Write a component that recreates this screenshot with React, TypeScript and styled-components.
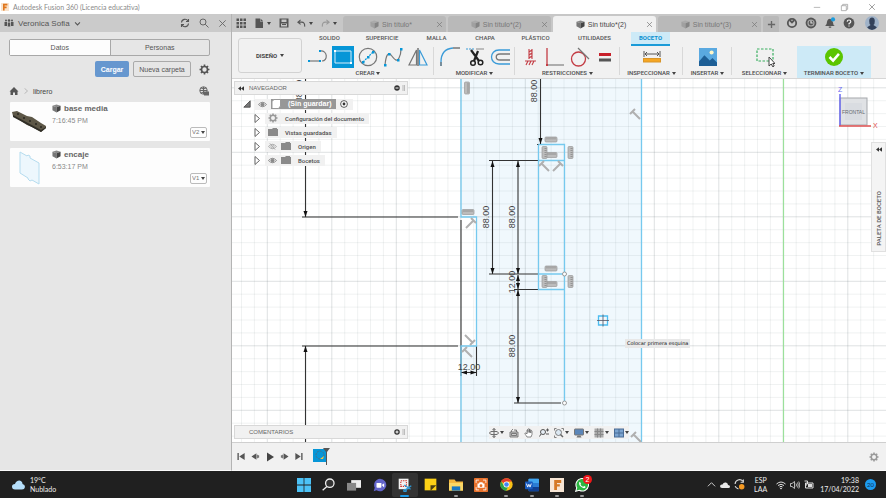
import React from 'react';
import styled, { createGlobalStyle, css } from 'styled-components';

const ARIAL = "'Liberation Sans', Arial, sans-serif";
const ROBOTO = "Roboto, 'Liberation Sans', sans-serif";
const LATO = "Lato, 'Open Sans', sans-serif";

const GlobalStyle = createGlobalStyle`
  *, *::before, *::after { box-sizing: border-box; }
  html, body, #root { height: 100%; }
  body { margin: 0; overflow: hidden; background: #fff; font-family: ${ARIAL}; font-size: 7px; color: #444; }
  button, select { font: inherit; color: inherit; background: none; border: 0; padding: 0; margin: 0; }
  a { color: inherit; text-decoration: none; }
  ul { list-style: none; margin: 0; padding: 0; }
  svg { display: block; flex: none; }
`;

/* ---------- shell ---------- */
const Page = styled.div`
  min-height: 100vh; display: flex; flex-direction: column;
`;
const TitleBar = styled.header`
  display: flex; align-items: center; gap: 4px; height: 14px; padding: 0 10px 0 1px;
  background: #fff; color: #8a8a8a;
`;
const AppTitle = styled.h1`
  margin: 0; font: 7px/12px ${LATO}; flex: 1;
`;
const WindowButtons = styled.div`
  display: flex; gap: 19px;
`;
const Workspace = styled.div`
  flex: 1; min-height: 0; display: grid; grid-template-columns: 232px minmax(0, 1fr);
`;
const IconButton = styled.button`
  display: inline-flex; align-items: center; justify-content: center; gap: 3px;
`;
const Caret = styled.span`
  display: inline-block; border: 2px solid transparent; border-top: 3px solid #444; border-bottom: 0;
`;

/* ---------- data panel ---------- */
const DataPanel = styled.aside`
  background: #e6e6e6; border-right: 1px solid #b4b4b4; border-bottom: 1px solid #fafafa;
`;
const PanelHeader = styled.div`
  display: flex; align-items: center; height: 18px; padding: 0 4px; background: #cbcbcb;
`;
const TeamButton = styled.button`
  display: flex; align-items: center; gap: 4px; flex: 1; font-size: 8px; color: #555;
`;
const HeaderIcons = styled.div`
  display: flex; gap: 9px;
`;
const PanelBody = styled.div`
  display: flex; flex-direction: column; padding: 7px 21px 0 9px;
`;
const Segmented = styled.div`
  display: grid; grid-template-columns: 1fr 1fr; border: 1px solid #a8a8a8; border-radius: 2px;
`;
const Segment = styled.button<{ $on?: boolean }>`
  height: 15px; background: ${p => (p.$on ? '#fdfdfd' : 'transparent')}; color: #555;
  & + & { border-left: 1px solid #a8a8a8; }
`;
const Actions = styled.div`
  display: flex; align-items: center; justify-content: flex-end; gap: 4px; height: 16px; margin-top: 5px;
`;
const ActionButton = styled.button<{ $primary?: boolean }>`
  height: 16px; border-radius: 2px;
  ${p => p.$primary
    ? css`width: 34px; background: #6697cf; color: #fff; font-weight: 700;`
    : css`width: 58px; border: 1px solid #aaa; margin-right: 4px; color: #555;`}
`;
const Breadcrumb = styled.nav`
  display: flex; align-items: center; gap: 4px; height: 16px; margin-top: 6px; padding-right: 1px;
`;
const Crumb = styled.a`flex: 1;`;
const CardList = styled.ul`
  display: grid; gap: 7px; margin-top: 3px;
`;
const Card = styled.li`
  display: grid; grid-template-columns: 40px 1fr 17px; gap: 2px; height: 39px; padding-right: 3px; background: #fdfdfd; border-radius: 1px; margin-left: 1px;
`;
const CardTitle = styled.h2`
  display: flex; align-items: center; gap: 3px; margin: 1px 0 0; font: 700 8px/11px ${ARIAL}; color: #666;
`;
const CardTime = styled.time`
  display: block; font-size: 7px; line-height: 13px; color: #888;
`;
const Version = styled.span`
  display: flex; align-items: center; justify-content: center; gap: 1px; align-self: end; height: 11px; margin-bottom: 3px;
  border: 1px solid #bbb; border-radius: 2px;
`;
const VersionSelect = styled.select`
  appearance: none; font: 6px/9px ${ARIAL}; color: #777; width: 8px;
`;

/* ---------- document tabs ---------- */
const Main = styled.main`
  display: flex; flex-direction: column; min-width: 0;
`;
const DocBar = styled.div`
  display: flex; align-items: stretch; height: 18px; background: #c7c7c7;
`;
const QuickTools = styled.div`
  display: flex; align-items: center; width: 111px; padding-left: 4px; gap: 8px;
`;
const DocTabs = styled.div`
  display: flex; flex: 1; gap: 2px; padding-top: 2px;
`;
const DocTab = styled.div<{ $on?: boolean }>`
  flex: 1; display: flex; align-items: center; border-radius: 3px 3px 0 0; padding: 0 3px 0 3px;
  background: ${p => (p.$on ? '#f1f1f1' : '#b9b9b9')};
  color: ${p => (p.$on ? '#444' : '#777')};
`;
const DocTabName = styled.button`
  display: flex; align-items: center; justify-content: center; gap: 3px; flex: 1; font-size: 7px;
`;
const DocActions = styled.div`
  display: flex; align-items: center; gap: 7px; padding: 0 7px 0 2px;
`;
const Profile = styled(IconButton)`margin-left: 3px;`;
const NewTab = styled.button`
  align-self: stretch; display: flex; align-items: center; justify-content: center; width: 16px; margin-top: 2px; background: #b9b9b9; border-radius: 2px 2px 0 0;
`;

/* ---------- ribbon ---------- */
const Ribbon = styled.div`
  display: flex; height: 47px; background: #f1f1f1; border-bottom: 1px solid #d6d6d6; font: 6px/8px ${ROBOTO};
`;
const WorkspaceButton = styled.button`
  width: 64px; height: 35px; margin: 6px 0 0 6px; border: 1px solid #d2d2d2; border-radius: 3px;
  display: flex; align-items: center; justify-content: center; gap: 3px; font-weight: 700; color: #444;
`;
const RibbonMain = styled.div`
  display: flex; flex-direction: column;
`;
const RibbonTabs = styled.div`
  display: grid; grid-template-columns: 55px 50px 59px 38px 63px 55px 48px; height: 14px; font-weight: 500;
`;
const RibbonTab = styled.button<{ $on?: boolean }>`
  padding-bottom: 2px; color: #555;
  ${p => p.$on && css`width: 39px; justify-self: end; padding-bottom: 0; background: #cdeaf7; color: #0a8fd0; font-weight: 700; border-bottom: 2px solid #1a9bd8;`}
`;
const Groups = styled.div`
  display: grid; grid-template-columns: 132px 81px 105px 63px 49px 65px 74px; height: 32px;
`;
const Group = styled.section<{ $finish?: boolean }>`
  position: relative; display: flex; flex-direction: column; align-items: center;
  ${p => p.$finish
    ? css`background: #cdeaf7;`
    : css`&:not(:nth-last-child(2))::after { content: ''; position: absolute; right: 0; top: 1px; height: 28px; border-right: 1px solid #d8d8d8; }`}
`;
const Tools = styled.div`
  display: flex; justify-content: center; gap: 3px; height: 21px; align-items: center; margin-bottom: 2px;
`;
const Tool = styled.button<{ $on?: boolean }>`
  width: 22px; height: 22px; display: flex; align-items: center; justify-content: center;
  background: ${p => (p.$on ? '#0696d7' : 'transparent')};
`;
const GroupLabel = styled.button`
  display: flex; align-items: center; gap: 2px; height: 8px; font-weight: 500; color: #4c4c4c;
`;

/* ---------- canvas ---------- */
const Canvas = styled.div`
  position: relative; flex: 1; min-height: 0; overflow: hidden; background: #fff;
`;
const Sketch = styled.svg`
  position: absolute; inset: 0; width: 100%; height: 100%;
`;
const BrowserPanel = styled.div`
  position: absolute; top: 2px; left: 2px; width: 174px;
`;
const DockBar = styled.div`
  display: flex; align-items: center; height: 14px; padding: 0 1px 0 3px; background: #f1f1f1; border: 1px solid #d8d8d8;
  font: 6px/12px ${ARIAL}; color: #666; gap: 5px;
`;
const DockTitle = styled.span<{ $inset?: boolean }>`flex: 1; padding-left: ${p => (p.$inset ? 11 : 0)}px;`;
const Comments = styled.div`
  position: absolute; left: 2px; bottom: 3px; width: 174px;
`;
const Tree = styled.ul`padding: 2px 0 0 9px;`;
const TreeRow = styled.li<{ $depth: number }>`
  display: flex; align-items: center; gap: 4px; height: 14px; padding-left: ${p => p.$depth * 11}px;
`;
const TreeItem = styled.div`
  display: flex; align-items: center; gap: 4px; height: 11px; padding: 0 5px 0 3px; background: #f1f1f1;
  font: 500 6px/11px ${ROBOTO}; color: #4c4c4c;
`;
const TreeName = styled.span`padding-left: 3px;`;
const RootName = styled.span`
  display: flex; align-items: center; gap: 7px; height: 10px; width: 65px; background: #979797; color: #fff; font: 700 7px/10px ${ARIAL};
`;
const Palette = styled.button`
  position: absolute; top: 63px; right: 0; width: 15px; height: 110px; padding: 4px 0 5px; background: #f4f4f4; border: 1px solid #e0e0e0;
  display: flex; flex-direction: column; align-items: center; justify-content: space-between;
  font: 500 6px/8px ${ROBOTO}; color: #555;
`;
const PaletteTitle = styled.span`
  writing-mode: vertical-rl; transform: rotate(180deg);
`;
const Tooltip = styled.div`
  position: absolute; left: 393px; top: 260px; padding: 0 2px; background: #e8e8e8; font: 5px/9px 'DejaVu Sans', sans-serif; color: #111;
`;
const ViewCube = styled.button`
  position: absolute; top: 5px; right: 4px;
`;
const NavBar = styled.div`
  position: absolute; bottom: 3px; left: 50%; transform: translateX(-50%); height: 13px; background: #f1f1f1;
  display: flex; align-items: center; gap: 5px;
  button { gap: 1px; }
`;

/* ---------- timeline & taskbar ---------- */
const Timeline = styled.div`
  display: flex; align-items: center; height: 29px; padding: 0 7px 0 5px; gap: 5px; background: #f1f1f1; border-top: 1px solid #cfcfcf; border-bottom: 1px solid #fafafa;
`;
const Spacer = styled.span`flex: 1;`;
const TaskBar = styled.footer`
  display: grid; grid-template-columns: 1fr 304px 1fr; align-items: center; height: 27px; background: #202020; color: #eee; font: 7px/9px ${LATO};
`;
const Weather = styled.button`
  display: flex; align-items: center; gap: 5px; padding-left: 12px; text-align: left;
`;
const Apps = styled.div`
  display: grid; grid-template-columns: repeat(12, 1fr);
`;
const AppButton = styled.button<{ $state?: 'on' | 'open' }>`
  position: relative; height: 24px; display: flex; align-items: center; justify-content: center; border-radius: 2px;
  ${p => p.$state === 'on' && css`background: #333;`}
  ${p => p.$state && css`&::after { content: ''; position: absolute; bottom: 0; height: 2px; border-radius: 1px; width: ${p.$state === 'on' ? 9 : 4}px; background: ${p.$state === 'on' ? '#1c9be8' : '#999'}; }`}
`;
const Badge = styled.span`
  position: absolute; right: 3px; top: 2px; width: 9px; height: 9px; border-radius: 50%; background: #f01818; color: #fff; font: 7px/9px ${ARIAL}; text-align: center;
`;
const Tray = styled.div`
  display: flex; align-items: center; justify-content: flex-end; gap: 4px; padding-right: 10px;
`;
const Stack = styled.span<{ $right?: boolean; $gap?: number }>`
  text-align: ${p => (p.$right ? 'right' : 'center')}; white-space: pre-line; margin: 0 ${p => p.$gap ?? 0}px;
`;
const Count = styled.span`
  width: 11px; height: 11px; border-radius: 50%; background: #1c9bf0; color: #103050; font: 6px/11px ${LATO}; text-align: center;
`;

/* ---------- icons ---------- */
type IP = { w?: number; h?: number; vb?: string; children: React.ReactNode; stroke?: string; sw?: number; fill?: string };
const I = ({ w = 10, h, vb = '0 0 20 20', children, stroke = 'none', sw = 2, fill = 'none' }: IP) => (
  <svg width={w} height={h ?? w} viewBox={vb} fill={fill} stroke={stroke} strokeWidth={sw} aria-hidden="true">{children}</svg>
);
const Close = ({ c = '#777', w = 8 }: { c?: string; w?: number }) => <I w={w} stroke={c} sw={2}><path d="M3 3L17 17M17 3L3 17" /></I>;
const Cube = ({ dim }: { dim?: boolean }) => (
  <I w={9}><path d="M1 4L10 1L19 4L10 7Z" fill={dim ? '#aaa' : '#888'} /><path d="M1 4L10 7V19L1 14Z" fill={dim ? '#a0a0a0' : '#777'} /><path d="M19 4L10 7V19L19 14Z" fill={dim ? '#848484' : '#444'} /></I>
);
const Gear = ({ w = 11, c = '#555' }: { w?: number; c?: string }) => (
  <I w={w} stroke={c} sw={3}><circle cx="10" cy="10" r="5.5" /><path d="M10 1V4M10 16V19M1 10H4M16 10H19M3.6 3.6L5.7 5.7M14.3 14.3L16.4 16.4M3.6 16.4L5.7 14.3M14.3 5.7L16.4 3.6" /></I>
);
const Eye = ({ off }: { off?: boolean }) => (
  <I w={9} stroke={off ? '#aaa' : '#888'} sw={2}><path d="M1 10Q10 0 19 10Q10 20 1 10Z" /><circle cx="10" cy="10" r="3.5" fill={off ? 'none' : '#888'} />{off && <path d="M4 3L16 17" />}</I>
);
const Folder = () => <I w={10} h={8} vb="0 0 20 16" fill="#8a8a8a"><path d="M0 2H8L10 0H18V2H20V16H0Z" /></I>;
const Rewind = () => <I w={6} h={5} vb="0 0 14 10" fill="#333"><path d="M7 0V10L0 5ZM14 0V10L7 5Z" /></I>;
const Expander = ({ open }: { open?: boolean }) => open
  ? <I w={8} stroke="#444" sw={2} fill="#777"><path d="M18 2V18H2Z" /></I>
  : <I w={7} h={9} vb="0 0 14 18" stroke="#666" sw={2} fill="#fff"><path d="M2 1L11 9L2 17Z" /></I>;
const Dock = ({ plus }: { plus?: boolean }) => (
  <I w={12} h={8} vb="0 0 24 16"><circle cx="6" cy="8" r="5.5" fill="#333" /><path d={plus ? 'M3 8H9M6 5V11' : 'M3 8H9'} stroke="#fff" strokeWidth="2" /><path d="M18 2V14M21 2V14" stroke="#aaa" strokeWidth="1.5" /></I>
);

const createTools = [
  { n: 'Línea', i: <I w={20} stroke="#777" sw={1.2}><path d="M1 14H12" /><path d="M12 4C20 3 20 14 14 14" /><g fill="#0696d7" stroke="none"><rect y="13" width="2" height="2" /><rect x="11" y="13" width="2" height="2" /><rect x="11" y="3" width="2" height="2" /></g></I> },
  { n: 'Rectángulo', on: true, i: <I w={20} stroke="#d6eefb" sw={1}><path d="M2 4H18V16H2Z" /><g fill="#fff" stroke="none"><rect x="1" y="3" width="2" height="2" /><rect x="17" y="15" width="2" height="2" /></g></I> },
  { n: 'Círculo', i: <I w={20} stroke="#777" sw={1.2}><circle cx="10" cy="10" r="8.7" /><path d="M5 15L15 5" strokeDasharray="2 1" stroke="#0696d7" /><g fill="#0696d7" stroke="none"><rect x="4" y="14" width="2.5" height="2.5" /><rect x="9" y="9" width="2.5" height="2.5" /><rect x="14" y="4" width="2.5" height="2.5" /></g></I> },
  { n: 'Spline', i: <I w={20} stroke="#777" sw={1.2}><path d="M2 18C3 8 5 5 8 8C12 13 14 15 16 11C18 7 18 5 18 2" /><g fill="#0696d7" stroke="none"><rect x="1" y="17" width="2.5" height="2.5" /><rect x="5" y="6" width="2.5" height="2.5" /><rect x="14" y="12" width="2.5" height="2.5" /><rect x="17" y="1" width="2.5" height="2.5" /></g></I> },
  { n: 'Simetría', i: <I w={20} sw={1.2}><path d="M8.500 3V18H1Z" stroke="#777" /><path d="M11.500 3V18H19Z" stroke="#3a9bd8" /><path d="M10 1V19" stroke="#555" /></I> },
];
const modifyTools = [
  { n: 'Empalme', i: <I w={20} sw={1.3}><path d="M1 19V15Q1 2 13 1" stroke="#3a9bd8" /><path d="M13 1H20M1 15V19" stroke="#777" /></I> },
  { n: 'Recortar', i: <I w={20} sw={1.2}><path d="M1 2H9" stroke="#3a9bd8" strokeDasharray="2 1" /><path d="M11 2H19" stroke="#999" /><path d="M6 3L14 14M13 4L9 14" stroke="#222" strokeWidth="2.2" /><circle cx="8" cy="16" r="2.3" stroke="#222" strokeWidth="1.5" /><circle cx="15.500" cy="15.500" r="2.3" stroke="#222" strokeWidth="1.5" /></I> },
  { n: 'Desfase', i: <I w={20} sw={1.3}><path d="M20 3H9C-1 3 -1 17 9 17H20" stroke="#3a9bd8" /><path d="M20 7H10C5 7 5 13 10 13H20" stroke="#777" /></I> },
];
const constraintTools = [
  { n: 'Fijar', i: <I w={20} stroke="#c33c44" sw={1.1}><path d="M9 2V12M12 2V12M9 5L12 3M9 8L12 6M9 11L12 9M5 14H16M6 18L8 14M9 18L11 14M12 18L14 14" /></I> },
  { n: 'Perpendicular', i: <I w={20} sw={1.3}><path d="M2 1V18" stroke="#c33c44" /><path d="M2 18H19" stroke="#888" /><rect x="1" y="17" width="2" height="2" fill="#c33c44" /></I> },
  { n: 'Tangente', i: <I w={20} sw={1.3}><circle cx="8.500" cy="12" r="7" stroke="#c33c44" /><path d="M8 1L19 12" stroke="#777" /></I> },
  { n: 'Igual', i: <I w={20}><rect x="4" y="6" width="12" height="3" fill="#c8202a" /><rect x="4" y="11.500" width="12" height="3" fill="#555" /></I> },
];
type ToolDef = { n: string; on?: boolean; i: React.ReactNode };
const ToolGroup = ({ label, tools, finish }: { label: string; tools: ToolDef[]; finish?: boolean }) => (
  <Group $finish={finish}>
    <Tools>{tools.map(t => <Tool key={t.n} $on={t.on} aria-label={t.n}>{t.i}</Tool>)}</Tools>
    <GroupLabel>{label}<Caret /></GroupLabel>
  </Group>
);

/* ---------- sketch drawing ---------- */
const range = (n: number) => Array.from({ length: n }, (_, i) => i);
const STEP = 12.9;
const Arrow = ({ x, y, r }: { x: number; y: number; r: number }) => (
  <path d="M0 0L-2 -6H2Z" fill="#111" transform={`translate(${x} ${y}) rotate(${r})`} />
);
const VDim = ({ x, a, b, up = true, down = true }: { x: number; a: number; b: number; up?: boolean; down?: boolean }) => (
  <g><path d={`M${x} ${a}V${b}`} stroke="#333" strokeWidth="1.1" />{up && <Arrow x={x} y={a} r={180} />}{down && <Arrow x={x} y={b} r={0} />}</g>
);
const Dim = ({ x, y, t }: { x: number; y: number; t: string }) => (
  <text transform={`translate(${x} ${y}) rotate(-90)`} textAnchor="middle">{t}</text>
);
const Mark = ({ x, y, v }: { x: number; y: number; v?: boolean }) => (
  <g transform={`translate(${x} ${y})${v ? ' rotate(90)' : ''}`}>
    <rect x="-6" y="-2.500" width="12" height="5" rx="1" fill="#bcbcbc" stroke="#999" strokeWidth=".7" />
    <path d="M-4 -2V0M-2 -2V0M0 -2V0M2 -2V0M4 -2V0" stroke="#777" strokeWidth=".6" />
  </g>
);
const Tee = ({ x, y, r = 0 }: { x: number; y: number; r?: number }) => (
  <path d="M-3 2L2 -3M0 0L7 7" stroke="#b0b0b0" strokeWidth="2" transform={`translate(${x} ${y}) rotate(${r})`} />
);
const SketchView = () => (
  <Sketch role="img" aria-label="Boceto" fill="none">
    <g transform="translate(-232 -79)">
      <path d="M461 79H641.500V1500H461V346H476.500V217H461Z" fill="#f0f8fd" />
      {range(160).map(i => <path key={`v${i}`} d={`M${241.5 + STEP * i} 79V1500`} stroke="#5a6a70" strokeOpacity={i % 5 === 2 ? 0.2 : 0.09} />)}
      {range(100).map(i => <path key={`h${i}`} d={`M232 ${87.8 + STEP * i}H2600`} stroke="#5a6a70" strokeOpacity={i % 5 === 0 ? 0.2 : 0.09} />)}
      <path d="M783.500 79V1500" stroke="#9be09b" strokeWidth="1.2" />
      <g stroke="#333" strokeWidth="1.1">
        <path d="M302 217H458M302 346H458M489 160.500H538M489 274H538M514 289.500H538M514 403H561M461 220V346M476.500 346V376M461 346V376M461 372.500H476M537 144.500H551" />
      </g>
      <g stroke="#76c9ee" strokeWidth="1.3">
        <path d="M461 79V217H476.500V346H461V1500M641.500 79V1500M538.500 144.500V289.500H564.500M538.500 144.500H564.500V403M538.500 160.500H564.500M538.500 274H564.500" />
      </g>
      <VDim x={305.5} a={79} b={217} up={false} />
      <VDim x={305.5} a={346} b={1500} down={false} />
      <VDim x={540.5} a={79} b={144} up={false} />
      <VDim x={492.5} a={161} b={274} />
      <VDim x={518} a={161} b={274} />
      <VDim x={518} a={275} b={289} />
      <VDim x={518} a={290} b={403} />
      <Arrow x={461} y={372.5} r={90} />
      <Arrow x={476.5} y={372.5} r={-90} />
      <g fill="#444" fontFamily="Liberation Sans, Arial, sans-serif" fontSize="9">
        <Dim x={302} y={91} t="88.00" />
        <Dim x={537} y={91} t="88.00" />
        <Dim x={489} y={217} t="88.00" />
        <Dim x={515} y={217} t="88.00" />
        <Dim x={515} y={282} t="12.00" />
        <Dim x={515} y={346} t="88.00" />
        <text x="469" y="370" textAnchor="middle">12.00</text>
      </g>
      {[[551, 139.5], [551, 155], [468, 212], [551, 268.5], [551, 284]].map(([x, y]) => <Mark key={`${x}-${y}`} x={x} y={y} />)}
      {[[544.5, 152.5], [570.5, 152.5], [467, 88], [544.5, 281.5], [570.5, 281.5]].map(([x, y]) => <Mark key={`${x}-${y}`} x={x} y={y} v />)}
      <Tee x={633} y={112} /><Tee x={542} y={164} /><Tee x={560} y={164} r={90} /><Tee x={473} y={221} r={90} />
      <Tee x={472} y={342} r={180} /><Tee x={465} y={350} /><Tee x={634} y={435} />
      <g fill="#fff" stroke="#999"><circle cx="564.500" cy="274" r="2" /><circle cx="564.500" cy="403" r="2" /></g>
      <path d="M598.500 316H607.500V325H598.500Z" stroke="#4cbcf0" strokeWidth="1.3" />
      <path d="M597 320.500H609M603 314.500V326.500" stroke="#556" strokeWidth=".8" />
    </g>
  </Sketch>
);

const navTools = [
  { n: 'Órbita', c: true, i: <I w={10} stroke="#555" sw={1.8}><path d="M10 1V19M7 4L10 1L13 4M7 16L10 19L13 16" /><ellipse cx="10" cy="10" rx="9" ry="3.500" /></I> },
  { n: 'Mirar a', i: <I w={10} stroke="#666" sw={1.6}><path d="M2 8H18V18H2ZM5 8V5L8 2M15 8V4H10M5 11H15V15H5Z" fill="#ccc" /></I> },
  { n: 'Encuadre', i: <I w={10} stroke="#666" sw={1.5} fill="#fff"><path d="M6 18C4 14 1 12 2 10Q4 9 6 12V4Q7 3 8 4V9V2Q9.500 1 11 2V9V3Q12.500 2 13.500 4V10V5Q15 4 16 6V13L14 18Z" /></I> },
  { n: 'Zoom', i: <I w={10} stroke="#555" sw={2}><circle cx="8" cy="8" r="5" fill="#e7eef5" /><path d="M4 12L1 17M14 4H20M17 1V7M14 12H20" /></I> },
  { n: 'Ajustar', c: true, i: <I w={10} stroke="#666" sw={1.6}><circle cx="9" cy="9" r="6" fill="#dce8f2" /><path d="M13 13L18 18" strokeWidth="3" /><path d="M1 5V1H5M15 1H19V5M1 15V19H5" /></I> },
  { n: 'Visualización', c: true, i: <I w={10}><rect x="1" y="2" width="18" height="12" rx="1" fill="#5c86b8" stroke="#777" strokeWidth="2" /><path d="M7 15H13L15 19H5Z" fill="#777" /></I> },
  { n: 'Rejilla', c: true, i: <I w={10}><rect x="1" y="1" width="18" height="18" fill="#aaa" /><path d="M1 7H19M1 13H19M7 1V19M13 1V19" stroke="#888" /></I> },
  { n: 'Ventanas', c: true, i: <I w={10}><rect x="1" y="2" width="18" height="16" fill="#7ba3cf" stroke="#4a6c96" strokeWidth="2" /><path d="M10 2V18M1 10H19" stroke="#4a6c96" strokeWidth="2" /></I> },
];

const apps: { n: string; s?: 'on' | 'open'; b?: string; i: React.ReactNode }[] = [
  { n: 'Inicio', i: <I w={14} vb="0 0 14 14"><path d="M0 0H6.600V6.600H0ZM7.400 0H14V6.600H7.400ZM0 7.400H6.600V14H0ZM7.400 7.400H14V14H7.400Z" fill="#4cc2f6" /></I> },
  { n: 'Buscar', i: <I w={13} stroke="#eee" sw={2}><circle cx="12" cy="8" r="6.500" fill="#333" /><path d="M7.500 13L1 19" /></I> },
  { n: 'Vista de tareas', i: <I w={14}><rect x="6" y="3" width="14" height="11" fill="#eee" /><rect y="7" width="13" height="11" fill="#888" /></I> },
  { n: 'Chat', i: <I w={14}><path d="M10 1A9 9 0 1 1 5 17.500L1 19L2.500 14A9 9 0 0 1 10 1Z" fill="#6264c9" /><rect x="5" y="7" width="7" height="7" rx="1" fill="#fff" /><path d="M12.500 10L16 7.500V13.500Z" fill="#fff" /></I> },
  { n: 'Recortes', s: 'on', i: <I w={14}><rect x="1" y="1" width="14" height="15" fill="#f2f2f2" /><rect x="4" y="4" width="8" height="8" stroke="#d0342c" strokeWidth="1.600" strokeDasharray="2 1.200" /><path d="M9 10L18 16M10 17L19 11" stroke="#2c9ad8" strokeWidth="1.800" /><circle cx="10" cy="18" r="1.700" stroke="#2c9ad8" /></I> },
  { n: 'Notas', i: <I w={13}><path d="M1 1H19V19H1Z" fill="#fcd116" /><path d="M10 19V11H19L11 19Z" fill="#4a4015" /></I> },
  { n: 'Explorador', s: 'open', i: <I w={14}><path d="M0 2H8L10 5H20V18H0Z" fill="#f3b53c" /><path d="M0 7H20V18H0Z" fill="#fbd765" /><path d="M4 12H16V18H4Z" fill="#1876c2" /></I> },
  { n: 'Captura', i: <I w={14}><rect width="20" height="20" rx="1" fill="#e8722d" /><path d="M3 7V3H7M13 3H17V7M17 13V17H13M7 17H3V13" stroke="#fff" strokeWidth="1.200" /><path d="M5 8H7L8 6H12L13 8H15V14H5Z" fill="#fff" /><circle cx="10" cy="11" r="2" fill="#e8722d" /></I> },
  { n: 'Chrome', s: 'open', i: <I w={13}><circle cx="10" cy="10" r="9.500" fill="#fbc116" /><path d="M10 10L1.700 5.300A9.500 9.500 0 0 1 18.300 5.500H10Z" fill="#e33b2e" /><path d="M1.700 5.300A9.500 9.500 0 0 0 9.500 19.500L13 12L7 13Z" fill="#2ba24c" /><circle cx="10" cy="10" r="4.600" fill="#fff" /><circle cx="10" cy="10" r="3.500" fill="#4285f4" /></I> },
  { n: 'Word', s: 'open', i: <I w={14}><rect x="5" y="1" width="15" height="18" rx="1" fill="#2b7cd3" /><path d="M5 7H20V2Q20 1 19 1H6Q5 1 5 2Z" fill="#41a5ee" /><path d="M5 13H20V18Q20 19 19 19H6Q5 19 5 18Z" fill="#103f91" /><rect y="5" width="11" height="11" rx="1" fill="#185abd" /><path d="M2 8L3.800 13L5.500 9L7.200 13L9 8" stroke="#fff" strokeWidth="1.300" /></I> },
  { n: 'Fusion 360', s: 'open', i: <I w={14}><rect width="20" height="20" fill="#f7e6d5" /><path d="M6 3H16V7H10V9H14V12H10V17H6Z" fill="#d67a26" /></I> },
  { n: 'WhatsApp', s: 'open', b: '2', i: <I w={14}><path d="M1 19L2.500 14A9 9 0 1 1 6 17.500Z" fill="#2cb742" stroke="#fff" strokeWidth="1.500" /><path d="M6 6Q7.500 5 8.500 8L8 9.500Q9.500 12 12 12.500L13 11.500Q15.500 12 15 13.500Q13 16 9 13Q5 10 6 6Z" fill="#fff" /></I> },
];

const tree = [
  { n: 'Configuración del documento', i: <Gear w={10} c="#999" /> },
  { n: 'Vistas guardadas', i: <Folder /> },
  { n: 'Origen', eye: true, off: true, i: <Folder /> },
  { n: 'Bocetos', eye: true, i: <Folder /> },
];

const files = [
  { n: 'base media', t: '7:16:45 PM', v: 'V2', i: <I w={38} h={39} vb="0 0 38 39"><path d="M2 10L7 9L17 14L22 15L31 21L36 24L36 26L31 30L22 25L17 23L8 17L3 14Z" fill="#5d5747" /><path d="M3 13L31 28L36 25V26L31 30L3 15Z" fill="#302e27" /><g fill="#2a2720"><circle cx="8" cy="12" r="1" /><circle cx="14" cy="16" r="1" /><circle cx="20" cy="19" r="1" /><circle cx="26" cy="22" r="1" /><circle cx="31" cy="25" r="1" /></g></I> },
  { n: 'encaje', t: '6:53:17 PM', v: 'V1', i: <I w={38} h={39} vb="0 0 38 39"><path d="M10 4L17 8L18 7L20 8L20 10L29 15V36L22 32L20 33L18 31V30L10 25Z" fill="#edf7fd" stroke="#b5dcef" strokeWidth="1" /></I> },
];

export default function App() {
  return (
    <Page>
      <GlobalStyle />
      <TitleBar>
        <I w={8}><rect width="20" height="20" fill="#f9e3cc" /><path d="M5 2H16V6H9V9H14V13H9V19H5Z" fill="#e0761c" /></I>
        <AppTitle>Autodesk Fusion 360 (Licencia educativa)</AppTitle>
        <WindowButtons>
          <IconButton aria-label="Minimizar"><I w={8} stroke="#aaa"><path d="M2 11H18" /></I></IconButton>
          <IconButton aria-label="Restaurar"><I w={9} stroke="#999" sw={1.6}><path d="M3 6H14V17H3ZM6 6V3H17V14H14" /></I></IconButton>
          <IconButton aria-label="Cerrar"><Close c="#888" /></IconButton>
        </WindowButtons>
      </TitleBar>
      <Workspace>
        <DataPanel>
          <PanelHeader>
            <TeamButton>
              <I w={10} fill="#555"><circle cx="4" cy="5" r="2" /><circle cx="10" cy="5" r="2.500" /><circle cx="16" cy="5" r="2" /><path d="M1 8H6V16H1ZM7.500 9H12.500V17H7.500ZM14 8H19V16H14Z" /></I>
              Veronica Sofia
              <I w={7} stroke="#555" sw={3}><path d="M3 7L10 14L17 7" /></I>
            </TeamButton>
            <HeaderIcons>
              <IconButton aria-label="Actualizar"><I w={10} stroke="#555" sw={2.2}><path d="M3 9A7 7 0 0 1 16 6M17 11A7 7 0 0 1 4 14M17 2V7H12M3 18V13H8" /></I></IconButton>
              <IconButton aria-label="Buscar"><I w={10} stroke="#666"><circle cx="8" cy="8" r="6" /><path d="M12.500 12.500L19 19" /></I></IconButton>
              <IconButton aria-label="Cerrar panel"><Close c="#666" w={9} /></IconButton>
            </HeaderIcons>
          </PanelHeader>
          <PanelBody>
            <Segmented><Segment $on>Datos</Segment><Segment>Personas</Segment></Segmented>
            <Actions>
              <ActionButton $primary>Cargar</ActionButton>
              <ActionButton>Nueva carpeta</ActionButton>
              <IconButton aria-label="Configuración"><Gear /></IconButton>
            </Actions>
            <Breadcrumb>
              <IconButton aria-label="Inicio"><I w={10} fill="#555"><path d="M10 2L19 11H17V18H12V13H8V18H3V11H1Z" /></I></IconButton>
              <I w={6} stroke="#aaa" sw={2.5}><path d="M5 1L15 10L5 19" /></I>
              <Crumb href="#librero">librero</Crumb>
              <IconButton aria-label="Compartir"><I w={10} stroke="#666" sw={2}><circle cx="9" cy="9" r="7.500" /><path d="M2 9H16M9 2V16M4 4Q9 8 14 4M4 14Q9 10 14 14" /><rect x="11" y="12" width="8" height="6" fill="#666" /></I></IconButton>
            </Breadcrumb>
            <CardList>
              {files.map(f => (
                <Card key={f.n}>
                  {f.i}
                  <div><CardTitle><Cube />{f.n}</CardTitle><CardTime>{f.t}</CardTime></div>
                  <Version>
                    <VersionSelect aria-label={`Versión de ${f.n}`} defaultValue={f.v}><option>{f.v}</option></VersionSelect>
                    <Caret />
                  </Version>
                </Card>
              ))}
            </CardList>
          </PanelBody>
        </DataPanel>
        <Main>
          <DocBar>
            <QuickTools>
              <IconButton aria-label="Panel de datos"><I w={10} fill="#555"><path d="M1 1H6V6H1ZM8 1H13V6H8ZM15 1H20V6H15ZM1 8H6V13H1ZM8 8H13V13H8ZM15 8H20V13H15ZM1 15H6V20H1ZM8 15H13V20H8ZM15 15H20V20H15Z" /></I></IconButton>
              <IconButton aria-label="Archivo"><I w={10} fill="#555"><path d="M3 1H12V7H18V20H3ZM13 1L18 6H13Z" /></I><Caret /></IconButton>
              <IconButton aria-label="Guardar"><I w={10} fill="#555"><path fillRule="evenodd" d="M1 1H19V19H1ZM5 3V8H15V3ZM4 11V17H16V11ZM6 12H14V14H6Z" /></I></IconButton>
              <IconButton aria-label="Deshacer"><I w={9} stroke="#555" sw={2.5}><path d="M8 2L2 7L8 12M2 7H10Q18 7 17 17" /></I><Caret /></IconButton>
              <IconButton aria-label="Rehacer"><I w={9} stroke="#999" sw={2.5}><path d="M12 2L18 7L12 12M18 7H10Q2 7 3 17" /></I><Caret /></IconButton>
            </QuickTools>
            <DocTabs>
              {['Sin título*', 'Sin título*(2)', 'Sin título*(2)', 'Sin título*(3)'].map((t, i) => (
                <DocTab key={i} $on={i === 2}>
                  <DocTabName><Cube dim={i !== 2} />{t}</DocTabName>
                  <IconButton aria-label="Cerrar documento"><Close w={7} /></IconButton>
                </DocTab>
              ))}
            </DocTabs>
            <DocActions>
              <NewTab aria-label="Nuevo"><I w={9} stroke="#666" sw={3}><path d="M10 2V18M2 10H18" /></I></NewTab>
              <IconButton aria-label="Extensiones"><I w={12} stroke="#555" sw={3}><circle cx="10" cy="10" r="7" /><path d="M6 5L10 9L14 5" /></I></IconButton>
              <IconButton aria-label="Estado"><I w={12}><circle cx="10" cy="10" r="9" fill="#555" /><circle cx="10" cy="10" r="5" stroke="#aaa" /><path d="M10 6V10H13" stroke="#ddd" strokeWidth="2" /></I></IconButton>
              <IconButton aria-label="Notificaciones"><I w={12}><path d="M2 15Q5 13 5 8Q6 3 10 3Q14 4 15 9Q15 13 18 15ZM8 16H12V18H8Z" fill="#555" /><circle cx="15" cy="4" r="3.500" fill="#1a9bdc" /></I></IconButton>
              <IconButton aria-label="Ayuda"><I w={12}><circle cx="10" cy="10" r="9" fill="#555" /><path d="M7 8Q7 5 10 5Q13 5 13 8Q13 9.500 10 11V12.500M10 14V16" stroke="#eee" strokeWidth="2" /></I></IconButton>
              <Profile aria-label="Perfil"><I w={14}><circle cx="10" cy="10" r="10" fill="#9fb2c8" /><path d="M6 7Q6 2 10 2Q14 2 14 7Q14 12 12 13L17 16Q14 20 10 20Q6 20 3 16L8 13Q6 12 6 7Z" fill="#34425a" /></I></Profile>
            </DocActions>
          </DocBar>
          <Ribbon>
            <WorkspaceButton>DISEÑO<Caret /></WorkspaceButton>
            <RibbonMain>
              <RibbonTabs>
                {['SOLIDO', 'SUPERFICIE', 'MALLA', 'CHAPA', 'PLÁSTICO', 'UTILIDADES', 'BOCETO'].map(t => <RibbonTab key={t} $on={t === 'BOCETO'}>{t}</RibbonTab>)}
              </RibbonTabs>
              <Groups>
                <ToolGroup label="CREAR" tools={createTools} />
                <ToolGroup label="MODIFICAR" tools={modifyTools} />
                <ToolGroup label="RESTRICCIONES" tools={constraintTools} />
                <ToolGroup label="INSPECCIONAR" tools={[{ n: 'Medir', i: <I w={20} stroke="#555" sw={1}><path d="M2 4V10M18 4V10M3 7H17M5 5L3 7L5 9M15 5L17 7L15 9" /><rect x="1.500" y="11.500" width="17" height="3.500" fill="#f5a623" stroke="#d8952a" /></I> }]} />
                <ToolGroup label="INSERTAR" tools={[{ n: 'Insertar imagen', i: <I w={18}><rect width="20" height="20" fill="#5aa9e0" /><path d="M0 15L6 8L12 14L15 11L20 16V20H0Z" fill="#1e5f96" /><circle cx="14" cy="5" r="2.300" fill="#fff6c8" /></I> }]} />
                <ToolGroup label="SELECCIONAR" tools={[{ n: 'Seleccionar', i: <I w={20}><path d="M2 2H18V14H2Z" stroke="#3bb061" strokeWidth="1.200" strokeDasharray="2.500 1.500" /><path d="M14 10V19L16.200 17L18 20L19.200 19L17.700 16.500H20Z" fill="#fff" stroke="#444" strokeWidth="1" /></I> }]} />
                <ToolGroup finish label="TERMINAR BOCETO" tools={[{ n: 'Terminar boceto', i: <I w={18}><circle cx="10" cy="10" r="10" fill="#5bc500" /><path d="M5 10L9 14L15.500 6.500" stroke="#fff" strokeWidth="2.800" /></I> }]} />
              </Groups>
            </RibbonMain>
          </Ribbon>
          <Canvas>
            <SketchView />
            <BrowserPanel>
              <DockBar><Rewind /><DockTitle>NAVEGADOR</DockTitle><Dock /></DockBar>
              <Tree>
                <TreeRow $depth={0}>
                  <Expander open />
                  <TreeItem>
                    <Eye />
                    <RootName><I w={10} fill="#fff" stroke="#999"><path d="M2 5L6 1H19V14L15 19H2Z" /></I>(Sin guardar)</RootName>
                    <I w={8}><circle cx="10" cy="10" r="8.500" stroke="#333" strokeWidth="2" fill="#fff" /><circle cx="10" cy="10" r="3.500" fill="#333" /></I>
                  </TreeItem>
                </TreeRow>
                {tree.map(t => (
                  <TreeRow key={t.n} $depth={1}>
                    <Expander />
                    <TreeItem>{t.eye && <Eye off={t.off} />}{t.i}<TreeName>{t.n}</TreeName></TreeItem>
                  </TreeRow>
                ))}
              </Tree>
            </BrowserPanel>
            <Comments><DockBar><DockTitle $inset>COMENTARIOS</DockTitle><Dock plus /></DockBar></Comments>
            <Tooltip role="tooltip">Colocar primera esquina</Tooltip>
            <ViewCube aria-label="Vista frontal">
              <svg width="44" height="46" viewBox="0 0 44 46">
                <rect x="2" y="14" width="27" height="27" fill="#e0e2e5" stroke="#a5a8ac" />
                <rect x="7" y="19" width="17" height="17" fill="#d9dce1" />
                <path d="M2 10V42" stroke="#6a6af0" strokeWidth="1.500" /><path d="M1 42H33" stroke="#e05050" strokeWidth="1.500" />
                <text x="15.500" y="30" fontSize="5" fill="#666a70" textAnchor="middle" fontFamily="Liberation Sans, sans-serif">FRONTAL</text>
                <text x="0" y="8" fontSize="7" fill="#6a6af0" fontFamily="Liberation Sans, sans-serif">Z</text>
                <text x="35" y="44" fontSize="7" fill="#e05050" fontFamily="Liberation Sans, sans-serif">X</text>
              </svg>
            </ViewCube>
            <Palette><Rewind /><PaletteTitle>PALETA DE BOCETO</PaletteTitle></Palette>
            <NavBar>{navTools.map(t => <IconButton key={t.n} aria-label={t.n}>{t.i}{t.c && <Caret />}</IconButton>)}</NavBar>
          </Canvas>
          <Timeline>
            <IconButton aria-label="Ir al inicio"><I w={9} fill="#555"><path d="M1 2H4V18H1ZM17 2V18L5 10Z" /></I></IconButton>
            <IconButton aria-label="Paso atrás"><I w={9} fill="#555"><path d="M12 3V17L1 10ZM13 6H15V14H13ZM16 7H18V13H16Z" /></I></IconButton>
            <IconButton aria-label="Reproducir"><I w={10} fill="#444"><path d="M4 1V19L18 10Z" /></I></IconButton>
            <IconButton aria-label="Paso adelante"><I w={9} fill="#555"><path d="M8 3V17L19 10ZM5 6H7V14H5ZM2 7H4V13H2Z" /></I></IconButton>
            <IconButton aria-label="Ir al final"><I w={9} fill="#555"><path d="M16 2H19V18H16ZM3 2V18L15 10Z" /></I></IconButton>
            <IconButton aria-label="Boceto 1">
              <svg width="24" height="19" viewBox="0 0 24 19"><rect x="5" y="2" width="14" height="13" fill="#0696d7" /><circle cx="12" cy="8" r="4" fill="none" stroke="#4a6f8a" strokeDasharray="2 1" /><path d="M12 12L16 9L15 12Z" fill="#f5c542" /><path d="M15 1H22L19 5V18H18V5Z" fill="#555" /></svg>
            </IconButton>
            <Spacer />
            <IconButton aria-label="Ajustes de línea de tiempo"><Gear w={10} c="#999" /></IconButton>
          </Timeline>
        </Main>
      </Workspace>
      <TaskBar>
        <Weather>
          <I w={13} h={10} vb="0 0 26 20"><path d="M6 19Q0 19 0 13Q0 8 6 8Q8 1 15 1Q21 2 21 8Q26 9 26 14Q25 19 20 19Z" fill="#b5defa" /></I>
          <span>19°C<br />Nublado</span>
        </Weather>
        <Apps>{apps.map(a => <AppButton key={a.n} $state={a.s} aria-label={a.n}>{a.i}{a.b && <Badge>{a.b}</Badge>}</AppButton>)}</Apps>
        <Tray>
          <I w={9} stroke="#ddd"><path d="M2 14L10 6L18 14" /></I>
          <I w={10} fill="#e8e8e8"><path d="M4 16Q0 16 0 12Q1 8 5 9Q7 4 12 5Q16 6 16 10Q20 10 20 13Q20 16 17 16Z" /></I>
          <I w={11} stroke="#ddd" sw={2}><path d="M2 9A8 8 0 0 1 16 4M17 1V6H12M8 18A8 8 0 0 1 2 13" /><circle cx="14" cy="14" r="5" fill="#f59a23" stroke="none" /></I>
          <Stack $gap={5}>{'ESP\nLAA'}</Stack>
          <I w={10} stroke="#ddd"><path d="M1 8Q10 0 19 8M4 11Q10 6 16 11M7 14Q10 11 13 14" /><circle cx="10" cy="17" r="1" fill="#ddd" /></I>
          <I w={10} stroke="#ddd" sw={1.6}><path d="M1 7H4L9 3V17L4 13H1ZM12 7Q14 10 12 13M15 5Q18 10 15 15M17.500 3Q22 10 17.500 17" /></I>
          <I w={10}><path d="M3 6H18V16H3Z" stroke="#ddd" strokeWidth="2" /><path d="M8 8H16V14H8Z" fill="#ddd" /><path d="M1 2H7V8H4V12" stroke="#ddd" strokeWidth="2" /></I>
          <Stack $right $gap={2}>{'19:38\n17/04/2022'}</Stack>
          <Count>20</Count>
        </Tray>
      </TaskBar>
    </Page>
  );
}
